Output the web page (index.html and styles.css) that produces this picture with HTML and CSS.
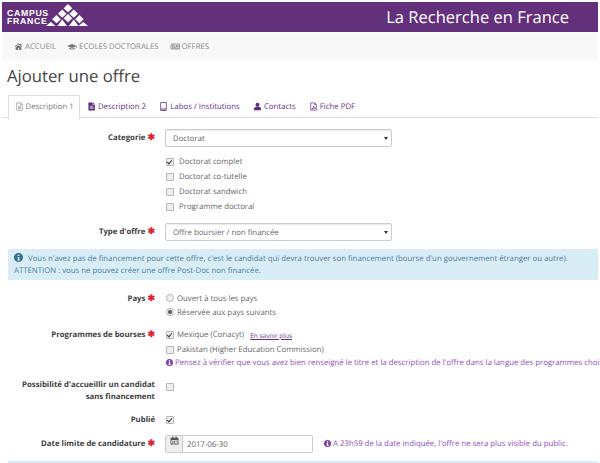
FILE: index.html
```html
<!DOCTYPE html>
<html lang="fr">
<head>
    <meta charset="UTF-8">
    <meta name="viewport" content="width=device-width, initial-scale=1.0">
    <title>Ajouter une offre</title>
    <link rel="stylesheet" href="styles.css">
</head>
<body>
    <div class="page">
        <header class="banner">
            <div class="logo">
                <div class="logo-text">CAMPUS<br>FRANCE</div>
                <svg class="logo-mark" width="42" height="22" viewBox="0 0 44 24" preserveAspectRatio="none" fill="#fff">
                    <path d="M23 0l4.500 4.500-4.500 4.500-4.500-4.500z"/>
                    <path d="M17 6l4.500 4.500-4.500 4.500-4.500-4.500z"/>
                    <path d="M29 6l4.500 4.500-4.500 4.500-4.500-4.500z"/>
                    <path d="M11 12l4.500 4.500-4.500 4.500-4.500-4.500z"/>
                    <path d="M23 11l4.500 4.500-4.500 4.500-4.500-4.500z"/>
                    <path d="M35 12l4.500 4.500-4.500 4.500-4.500-4.500z"/>
                    <path d="M0 24l5-4.500 5 4.500z"/>
                    <path d="M12 24l5-7 5 7z"/>
                    <path d="M24 24l5-7 5 7z"/>
                    <path d="M34 24l5-4.500 5 4.500z"/>
                </svg>
            </div>
            <div class="site-title">La Recherche en France</div>
        </header>

        <nav class="main-nav">
            <a>
                <svg class="ico" viewBox="0 0 16 16" fill="#777"><path d="M8 2L1 8l1 1 6-5 6 5 1-1-2-1.700V3h-2v1.600zM3 9.500V14h4v-3h2v3h4V9.500L8 5.300z"/></svg>
                ACCUEIL
            </a>
            <a>
                <svg class="ico ico-wide" viewBox="0 0 20 16" fill="#777"><path d="M10 3L0 7l10 4 8-3.200V12h1V7.300L20 7zM4.500 10.500V13c2 1.500 9 1.500 11 0v-2.500L10 12.700z"/></svg>
                ECOLES DOCTORALES
            </a>
            <a>
                <svg class="ico ico-wide" viewBox="0 0 20 16" fill="none" stroke="#777" stroke-width="1.400"><path d="M3 3h16v10H2V5h1zM5 5.500h5v4H5zM12 6h5M12 8h5M5 11h12"/></svg>
                OFFRES
            </a>
        </nav>

        <h1>Ajouter une offre</h1>

        <ul class="tabs">
            <li class="active">
                <svg class="ico" viewBox="0 0 16 16" fill="none" stroke="#999" stroke-width="1.300"><path d="M3 1.500h7l3 3v10H3zM10 1.500v3h3M5.500 7.500h5M5.500 9.500h5M5.500 11.500h5"/></svg>
                Description 1
            </li>
            <li>
                <svg class="ico" viewBox="0 0 16 16" fill="#5f2d7f"><path d="M2.500 1H10v4h4v10H2.500zM11 1l3 3h-3z"/><path d="M5 7.500h6.500M5 9.500h6.500M5 11.500h6.500" stroke="#fff"/></svg>
                Description 2
            </li>
            <li>
                <svg class="ico" viewBox="0 0 16 16" fill="none" stroke="#5f2d7f" stroke-width="1.400"><path d="M3 1h10v14H3zM3 12.500h10"/><path d="M7 14h2"/></svg>
                Labos / Institutions
            </li>
            <li>
                <svg class="ico" viewBox="0 0 16 16" fill="#5f2d7f"><circle cx="8" cy="5" r="3.500"/><path d="M1.500 14.500c0-4 2-6 4-6h5c2 0 4 2 4 6z"/></svg>
                Contacts
            </li>
            <li>
                <svg class="ico" viewBox="0 0 16 16" fill="none" stroke="#5f2d7f" stroke-width="1.200"><path d="M3 1.500h7l3 3v10H3zM10 1.500v3h3M5 12.500c2-1 3-3.500 3-5.500 0 2 1.500 3.500 3.500 4-2 0-4.500.5-6.500 1.500z"/></svg>
                Fiche PDF
            </li>
        </ul>

        <form class="offer-form">
            <div class="row row-categorie">
                <label class="lbl">Categorie <span class="req">&#10033;</span></label>
                <div class="ctl">
                    <div class="select">Doctorat<i class="caret"></i></div>
                </div>
            </div>
            <div class="row row-checks">
                <div class="lbl"></div>
                <div class="ctl">
                    <div class="opt"><i class="box on"></i>Doctorat complet</div>
                    <div class="opt"><i class="box"></i>Doctorat co-tutelle</div>
                    <div class="opt"><i class="box"></i>Doctorat sandwich</div>
                    <div class="opt"><i class="box"></i>Programme doctoral</div>
                </div>
            </div>
            <div class="row row-type">
                <label class="lbl">Type d'offre <span class="req">&#10033;</span></label>
                <div class="ctl">
                    <div class="select">Offre boursier / non financée<i class="caret"></i></div>
                </div>
            </div>

            <div class="alert-info">
                <svg class="ico-info" viewBox="0 0 16 16"><circle cx="8" cy="8" r="8" fill="#31708f"/><path d="M6.500 3h3v2.500h-3zM6 7h3.500v5H11v1.500H5.500V12H7V8.500H6z" fill="#d9edf7"/></svg>
                Vous n'avez pas de financement pour cette offre, c'est le candidat qui devra trouver son financement (bourse d'un gouvernement étranger ou autre).<br>
                ATTENTION : vous ne pouvez créer une offre Post-Doc non financée.
            </div>

            <div class="row row-pays">
                <label class="lbl">Pays <span class="req">&#10033;</span></label>
                <div class="ctl">
                    <div class="opt opt-tight"><i class="box radio"></i>Ouvert à tous les pays</div>
                    <div class="opt opt-tight"><i class="box radio on"></i>Réservée aux pays suivants</div>
                </div>
            </div>
            <div class="row row-prog">
                <label class="lbl">Programmes de bourses <span class="req">&#10033;</span></label>
                <div class="ctl">
                    <div class="opt opt-tight"><i class="box on"></i>Mexique (Conacyt) <a class="more">En savoir plus</a></div>
                    <div class="opt opt-tight"><i class="box"></i>Pakistan (Higher Education Commission)</div>
                    <div class="hint hint-prog">
                        <svg class="ico-hint" viewBox="0 0 16 16"><circle cx="8" cy="8" r="8" fill="#7d3fa8"/><path d="M6.500 3h3v2.500h-3zM6 7h3.500v5H11v1.500H5.500V12H7V8.500H6z" fill="#fff"/></svg>
                        Pensez à vérifier que vous avez bien renseigné le titre et la description de l'offre dans la langue des programmes choisis.
                    </div>
                </div>
            </div>
            <div class="row row-possible">
                <label class="lbl">Possibilité d'accueillir un candidat<br>sans financement</label>
                <div class="ctl"><i class="box"></i></div>
            </div>
            <div class="row row-publie">
                <label class="lbl">Publié</label>
                <div class="ctl"><i class="box on"></i></div>
            </div>
            <div class="row row-date">
                <label class="lbl">Date limite de candidature <span class="req">&#10033;</span></label>
                <div class="ctl ctl-date">
                    <div class="date-group">
                        <span class="addon">
                            <svg class="ico" viewBox="0 0 16 16" fill="#555"><path d="M1 3h3V1h2v2h4V1h2v2h3v12H1zM2.500 7v6.500h11V7z"/><path d="M4 8.500h2v1.500H4zM7 8.500h2v1.500H7zM10 8.500h2v1.500h-2zM4 11h2v1.500H4zM7 11h2v1.500H7z"/></svg>
                        </span>
                        <span class="date-val">2017-06-30</span>
                    </div>
                    <div class="hint hint-date">
                        <svg class="ico-hint" viewBox="0 0 16 16"><circle cx="8" cy="8" r="8" fill="#7d3fa8"/><path d="M6.500 3h3v2.500h-3zM6 7h3.500v5H11v1.500H5.500V12H7V8.500H6z" fill="#fff"/></svg>
                        A 23h59 de la date indiquée, l'offre ne sera plus visible du public.
                    </div>
                </div>
            </div>
            <div class="alert-bottom"></div>
        </form>
    </div>
</body>
</html>
```

FILE: styles.css
```css
html, body {
    margin: 0;
    padding: 0;
    background: #fff;
}
body {
    font-family: "Open Sans", sans-serif;
    font-size: 7.8px;
    color: #666;
    height: 463px;
    overflow: hidden;
    text-rendering: geometricPrecision;
}
.page {
    padding: 2px 2px 0 2px;
    overflow: hidden;
}
.ico {
    width: 9px;
    height: 9px;
    vertical-align: -2px;
}
.ico-wide {
    width: 10px;
}

/* purple banner */
.banner {
    height: 30px;
    background: #63317b;
    display: flex;
    align-items: center;
    justify-content: space-between;
}
.logo {
    display: flex;
    align-items: center;
    padding-left: 5px;
}
.logo-text {
    font-family: "Liberation Sans", sans-serif;
    font-weight: bold;
    font-size: 8.700px;
    line-height: 8.500px;
    letter-spacing: 0.7px;
    color: #fff;
}
.logo-mark {
    margin-left: -3px;
    margin-bottom: 4px;
}
.site-title {
    color: #fff;
    font-size: 16.550px;
    padding-right: 29px;
    padding-bottom: 2px;
}

/* nav */
.main-nav {
    height: 27px;
    padding-bottom: 1px;
    margin-top: 1px;
    background: #f8f8f8;
    display: flex;
    align-items: center;
    gap: 11px;
    padding-left: 12px;
    color: #888;
}

h1 {
    font-size: 16.700px;
    font-weight: 400;
    color: #444;
    margin: 0;
    padding: 3px 0 0 5px;
    height: 31px;
    line-height: 24px;
}

/* tabs */
.tabs {
    list-style: none;
    margin: 0;
    padding: 0 0 0 6px;
    height: 22px;
    display: flex;
    border-bottom: 1px solid #ddd;
    color: #63317b;
}
.tabs li {
    padding: 0 5.600px;
    line-height: 23px;
    white-space: nowrap;
    height: 22px;
    border: 1px solid transparent;
    border-bottom: 0;
}
.tabs li.active {
    color: #777;
    background: #fff;
    border-color: #ddd;
    height: 23px;
    border-radius: 2px 2px 0 0;
}

/* form rows */
.row {
    display: flex;
}
.lbl {
    width: 153px;
    flex: none;
    text-align: right;
    font-weight: 700;
    color: #3d3d3d;
    line-height: 11.500px;
    padding-top: 1px;
}
.req {
    color: #d9232e;
    font-size: 9px;
    line-height: 1;
}
.ctl {
    margin-left: 10px;
    flex: 1;
    min-width: 0;
}
.select {
    width: 227px;
    height: 18px;
    box-sizing: border-box;
    border: 1px solid #ccc;
    border-radius: 2px;
    line-height: 18px;
    padding-left: 7px;
    position: relative;
    box-shadow: inset 0 1px 1px rgba(0, 0, 0, 0.08);
}
.caret {
    position: absolute;
    right: 3px;
    top: 7px;
    border: 2px solid transparent;
    border-top: 3px solid #333;
    border-bottom: 0;
}
.row-categorie {
    margin-top: 11px;
}
.row-categorie .lbl, .row-type .lbl {
    line-height: 17px;
}
.row-checks {
    margin-top: 7px;
}
.row-checks .lbl {
    padding-top: 0;
}
.row-type {
    margin-top: 9px;
}
.opt {
    height: 15px;
    box-sizing: border-box;
    padding-top: 2px;
    line-height: 13px;
    display: flex;
    align-items: center;
    white-space: nowrap;
}
.box {
    display: block;
    flex: none;
    width: 6px;
    height: 6px;
    border: 1px solid #b5b5b5;
    border-radius: 1px;
    background: #eee;
    margin-left: 1px;
    margin-right: 5px;
    position: relative;
}
.opt .box {
    margin-top: -2px;
}
.opt-tight .box {
    margin-right: 3px;
}
.box.on::after {
    content: "";
    position: absolute;
    left: 1px;
    top: 0;
    width: 2px;
    height: 4px;
    border: solid #333;
    border-width: 0 1.500px 1.500px 0;
    transform: rotate(40deg);
}
.box.radio {
    border-radius: 50%;
}
.box.radio.on::after {
    left: 1px;
    top: 1px;
    width: 4px;
    height: 4px;
    border: 0;
    border-radius: 50%;
    background: #555;
    transform: none;
}

/* info boxes */
.alert-info {
    margin: 8px 0 0 6px;
    height: 31px;
    box-sizing: border-box;
    background: #d9edf7;
    color: #4a80a0;
    padding: 4px 0 0 6px;
    line-height: 11.500px;
    white-space: nowrap;
    overflow: hidden;
}
.ico-info {
    width: 9px;
    height: 9px;
    vertical-align: -1px;
    margin-right: 3px;
}
.ico-hint {
    width: 7px;
    height: 7px;
    vertical-align: -1px;
}
.row-pays {
    margin-top: 11px;
}
.row-pays .opt {
    height: 14px;
}
.row-pays .lbl {
    line-height: 14px;
}
.row-prog {
    margin-top: 8px;
}
.row-prog .lbl {
    line-height: 15px;
}
.more {
    font-size: 6.500px;
    color: #63317b;
    text-decoration: underline;
    margin-left: 6px;
}
.hint {
    color: #8e4fb8;
    white-space: nowrap;
    line-height: 12px;
}
.hint-prog {
    margin-left: 1px;
}
.row-possible {
    margin-top: 10px;
}
.row-possible .box {
    margin-top: 4px;
}
.row-publie {
    margin-top: 11px;
}
.row-publie .box {
    margin-top: 2px;
}
.row-date {
    margin-top: 8px;
}
.row-date .lbl {
    line-height: 17px;
}
.ctl-date {
    display: flex;
    align-items: center;
}
.date-group {
    display: flex;
    width: 148px;
    height: 18px;
    box-sizing: border-box;
    border: 1px solid #ccc;
    border-radius: 2px;
}
.addon {
    width: 16px;
    background: #eee;
    border-right: 1px solid #ccc;
    text-align: center;
}
.date-val {
    padding-left: 4px;
    line-height: 18px;
}
.hint-date {
    margin-left: 11px;
    padding-top: 1px;
}
.alert-bottom {
    margin: 8px 0 0 6px;
    height: 20px;
    background: #d9edf7;
}
```
